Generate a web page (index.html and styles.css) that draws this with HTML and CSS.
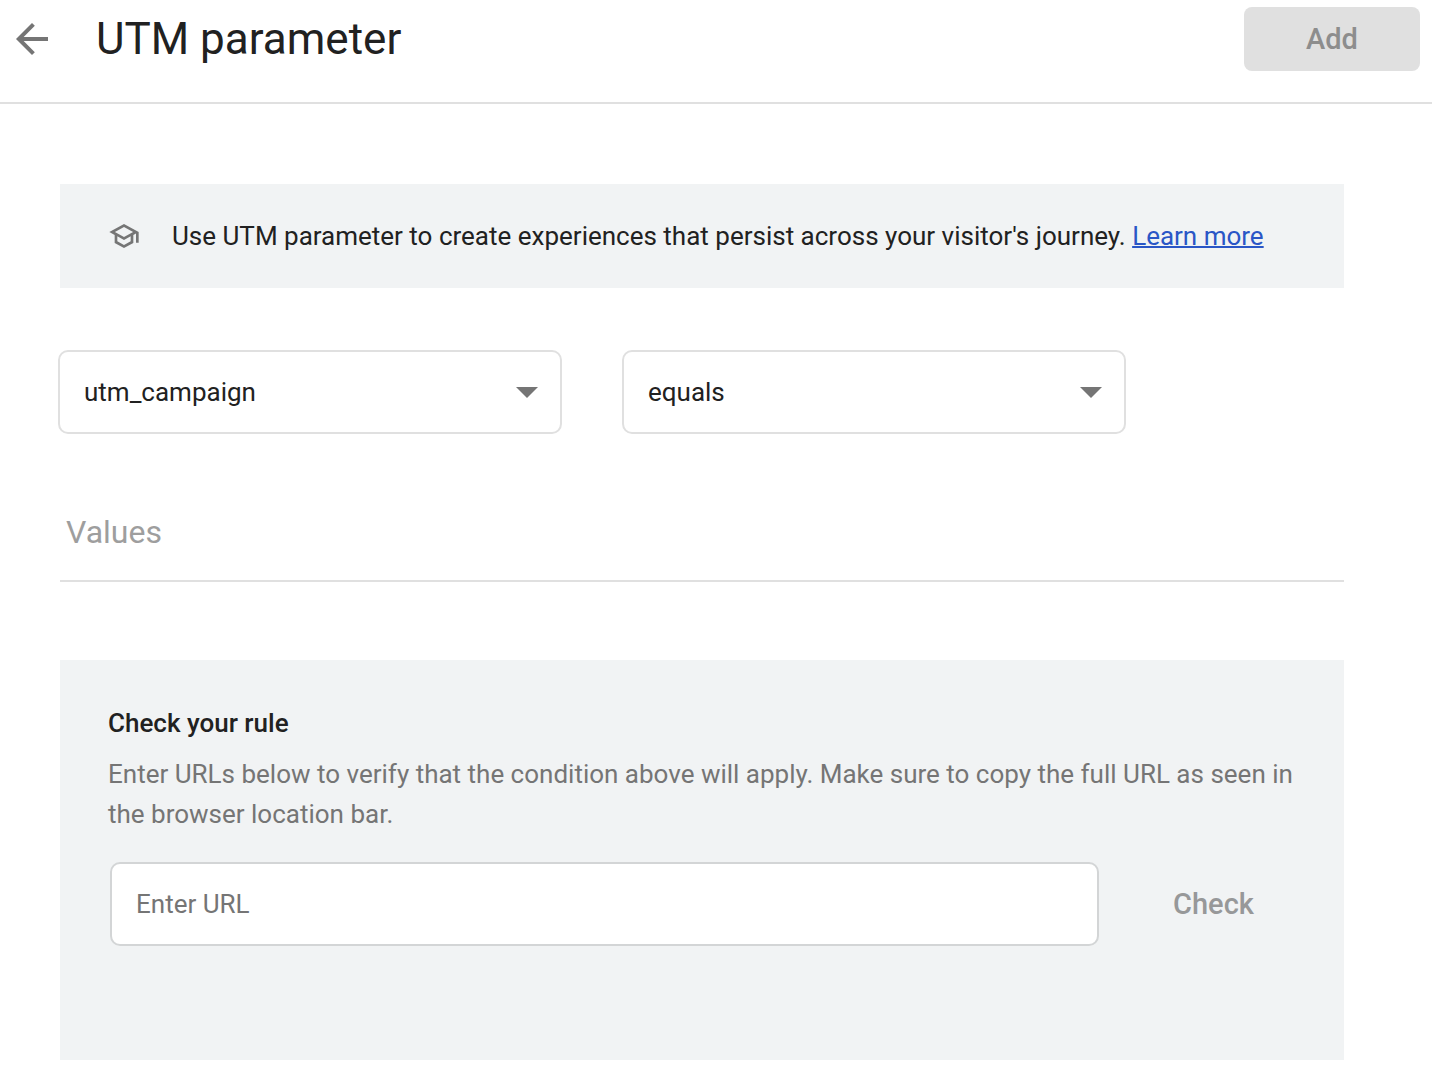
FILE: index.html
```html
<!DOCTYPE html>
<html lang="en">
<head>
<meta charset="utf-8">
<meta name="viewport" content="width=device-width, initial-scale=1">
<title>UTM parameter</title>
<link rel="stylesheet" href="styles.css">
</head>
<body>
<header class="header">
  <button class="back" type="button" aria-label="Back">
    <svg class="back-icon" viewBox="4 4 16 16" aria-hidden="true"><path d="M20 11H7.83l5.59-5.59L12 4l-8 8 8 8 1.41-1.41L7.83 13H20v-2z"/></svg>
  </button>
  <h1 class="title">UTM parameter</h1>
  <button class="add" type="button" disabled>Add</button>
</header>
<main class="content">
  <aside class="banner">
    <svg class="school-icon" viewBox="0 0 24 24" aria-hidden="true"><path d="M12 3L1 9l4 2.180v6L12 21l7-3.820v-6l2-1.090V17h2V9L12 3zm6.820 6L12 12.720 5.180 9 12 5.280 18.820 9zM17 15.990l-5 2.730-5-2.730v-3.720L12 15l5-2.730v3.720z"/></svg>
    <p class="banner-text">Use UTM parameter to create experiences that persist across your visitor's journey. <a class="link" href="#">Learn more</a></p>
  </aside>
  <div class="condition">
    <div class="select-wrap">
      <select class="select" aria-label="Parameter">
        <option>utm_campaign</option>
        <option>utm_source</option>
        <option>utm_medium</option>
      </select>
      <svg class="caret" viewBox="0 0 20 10" aria-hidden="true"><path d="M0 0h20L10 10z"/></svg>
    </div>
    <div class="select-wrap">
      <select class="select" aria-label="Match type">
        <option>equals</option>
        <option>contains</option>
      </select>
      <svg class="caret" viewBox="0 0 20 10" aria-hidden="true"><path d="M0 0h20L10 10z"/></svg>
    </div>
  </div>
  <input class="values" type="text" placeholder="Values" aria-label="Values">
  <section class="rule">
    <h2 class="rule-title">Check your rule</h2>
    <p class="rule-text">Enter URLs below to verify that the condition above will apply. Make sure to copy the full URL as seen in the browser location bar.</p>
    <form class="rule-form">
      <input class="url" type="text" placeholder="Enter URL" aria-label="URL">
      <button class="check" type="button" disabled>Check</button>
    </form>
  </section>
</main>
</body>
</html>
```

FILE: styles.css
```css
* {
  box-sizing: border-box;
}

body {
  margin: 0;
  background: #fff;
  color: #212121;
  font: 26px/40px Roboto, sans-serif;
}

button,
input,
select {
  font: inherit;
}

h1,
h2,
p {
  margin: 0;
}

.header {
  display: flex;
  align-items: center;
  padding: 7px 12px 31px 16px;
  border-bottom: 2px solid #e0e0e0;
}

.back {
  display: flex;
  padding: 0;
  border: 0;
  background: none;
}

.back-icon {
  width: 32px;
  height: 32px;
  fill: #757575;
}

.title {
  flex: 1;
  padding-left: 48px;
  font-size: 44px;
  font-weight: 400;
  line-height: 64px;
}

.add {
  width: 176px;
  height: 64px;
  border: 0;
  border-radius: 8px;
  background: #e0e0e0;
  color: #8d8d8d;
  font-size: 29px;
  font-weight: 500;
}

.content {
  padding: 80px 88px 16px 60px;
}

.banner {
  display: flex;
  align-items: center;
  gap: 32px;
  padding: 32px 48px;
  background: #f1f3f4;
}

.school-icon {
  flex: none;
  width: 32px;
  height: 32px;
  fill: #757575;
}

.link {
  color: #2a56c6;
  text-decoration-thickness: 2px;
}

.condition {
  display: flex;
  gap: 60px;
  margin: 62px 0 0 -2px;
}

.select-wrap {
  display: grid;
  align-items: center;
  flex: 0 1 504px;
}

.select,
.caret {
  grid-area: 1 / 1;
}

.select {
  width: 100%;
  height: 84px;
  padding: 0 24px;
  border: 2px solid #e0e0e0;
  border-radius: 10px;
  background: #fff;
  color: inherit;
  appearance: none;
}

.caret {
  justify-self: end;
  width: 22px;
  height: 11px;
  margin-right: 24px;
  fill: #757575;
  pointer-events: none;
}

.values {
  display: block;
  width: 100%;
  height: 100px;
  margin-top: 48px;
  padding: 2px 6px 0;
  border: 0;
  border-bottom: 2px solid #e0e0e0;
  background: none;
  font-size: 32px;
}

.values::placeholder {
  color: #9e9e9e;
}

.rule {
  margin-top: 78px;
  padding: 43px 48px 114px;
  background: #f1f3f4;
}

.rule-title {
  margin-bottom: 11px;
  font-size: 26px;
  font-weight: 500;
}

.rule-text {
  color: #757575;
}

.rule-form {
  display: flex;
  align-items: center;
  gap: 48px;
  margin: 28px 16px 0 2px;
}

.url {
  flex: 1;
  min-width: 0;
  height: 84px;
  padding: 0 24px;
  border: 2px solid #d3d5d6;
  border-radius: 10px;
  background: #fff;
}

.url::placeholder {
  color: #757575;
}

.check {
  width: 133px;
  height: 64px;
  padding: 0;
  border: 0;
  background: none;
  color: #979899;
  font-size: 29px;
  font-weight: 500;
}
```
